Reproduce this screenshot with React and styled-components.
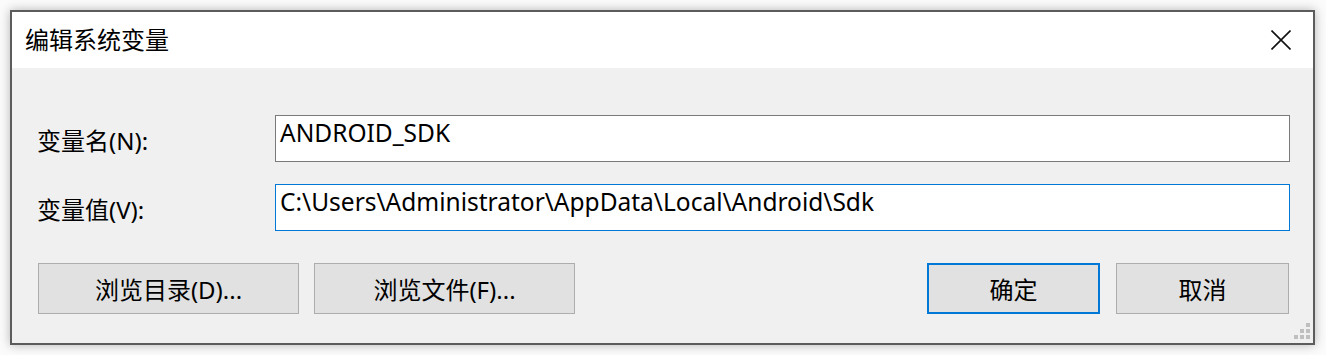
import React from "react";
import styled, { createGlobalStyle } from "styled-components";

const GlobalStyle = createGlobalStyle`
  html, body {
    margin: 0;
    padding: 0;
    background: #fbfbfb;
  }
  body {
    font-family: "Noto Sans", "Noto Sans CJK SC", sans-serif;
  }
`;

const Page = styled.div`
  padding: 10px;
  width: 1326px;
  height: 355px;
  box-sizing: border-box;
`;

const Window = styled.div`
  position: relative;
  width: 1305px;
  height: 335px;
  box-sizing: border-box;
  border: 2px solid #5c5c5c;
  background: #f0f0f0;
  box-shadow: 0 0 10px rgba(0, 0, 0, 0.28);
  display: flex;
  flex-direction: column;
`;

const TitleBar = styled.div`
  height: 56px;
  background: #ffffff;
  display: flex;
  align-items: center;
  justify-content: space-between;
  padding: 0 22px 0 13px;
`;

const Title = styled.div`
  font-size: 24px;
  color: #000;
  line-height: 1;
  margin-top: -1px;
`;

const CloseButton = styled.div`
  width: 20px;
  height: 20px;
  display: flex;
  margin-top: -1px;
`;

const Body = styled.div`
  flex: 1;
  padding: 47px 23px 0 26px;
  display: flex;
  flex-direction: column;
`;

const FieldRow = styled.div`
  display: grid;
  grid-template-columns: 237px 1fr;
  align-items: center;
  margin-bottom: 22px;
`;

const Label = styled.div`
  font-size: 24px;
  color: #000;
  margin-left: -1px;
  margin-top: 2px;
`;

const TextBox = styled.div`
  height: 47px;
  box-sizing: border-box;
  background: #fff;
  border: 1px solid ${(p) => (p.focused ? "#0078d7" : "#7a7a7a")};
  padding: 2px 0 0 4px;
  font-size: 24.5px;
  line-height: 30px;
  color: #000;
  white-space: nowrap;
  overflow: hidden;
`;

const ButtonRow = styled.div`
  display: flex;
  justify-content: space-between;
  margin-top: 10px;
  padding-right: 1px;
`;

const ButtonGroup = styled.div`
  display: flex;
  gap: ${(p) => p.gap}px;
`;

const Button = styled.div`
  width: ${(p) => p.w}px;
  height: 51px;
  box-sizing: border-box;
  background: #e1e1e1;
  border: ${(p) => (p.primary ? "2px solid #0078d7" : "1px solid #adadad")};
  display: flex;
  align-items: center;
  justify-content: center;
  font-size: 24px;
  color: #000;
`;

const Grip = styled.div`
  position: absolute;
  right: 3px;
  bottom: 4px;
  display: grid;
  grid-template-columns: repeat(3, 4px);
  grid-template-rows: repeat(3, 4px);
  gap: 2px;
`;

const GripDot = styled.span`
  background: ${(p) => (p.on ? "#bfbfbf" : "transparent")};
`;

const gripPattern = [0, 0, 1, 0, 1, 1, 1, 1, 1];

const App = () => {
  return (
    <Page>
      <GlobalStyle />
      <Window>
        <TitleBar>
          <Title>编辑系统变量</Title>
          <CloseButton>
            <svg width="20" height="20" viewBox="0 0 20 20">
              <path d="M0.5 0.5 L19.5 19.5 M19.5 0.5 L0.5 19.5" stroke="#111" strokeWidth="1.6" fill="none" />
            </svg>
          </CloseButton>
        </TitleBar>
        <Body>
          <FieldRow>
            <Label>变量名(N):</Label>
            <TextBox>ANDROID_SDK</TextBox>
          </FieldRow>
          <FieldRow>
            <Label>变量值(V):</Label>
            <TextBox focused>C:\Users\Administrator\AppData\Local\Android\Sdk</TextBox>
          </FieldRow>
          <ButtonRow>
            <ButtonGroup gap={15}>
              <Button w={261}>浏览目录(D)...</Button>
              <Button w={261}>浏览文件(F)...</Button>
            </ButtonGroup>
            <ButtonGroup gap={16}>
              <Button w={173} primary>确定</Button>
              <Button w={173}>取消</Button>
            </ButtonGroup>
          </ButtonRow>
        </Body>
        <Grip>
          {gripPattern.map((on, i) => (
            <GripDot key={i} on={on} />
          ))}
        </Grip>
      </Window>
    </Page>
  );
};

export default App;
